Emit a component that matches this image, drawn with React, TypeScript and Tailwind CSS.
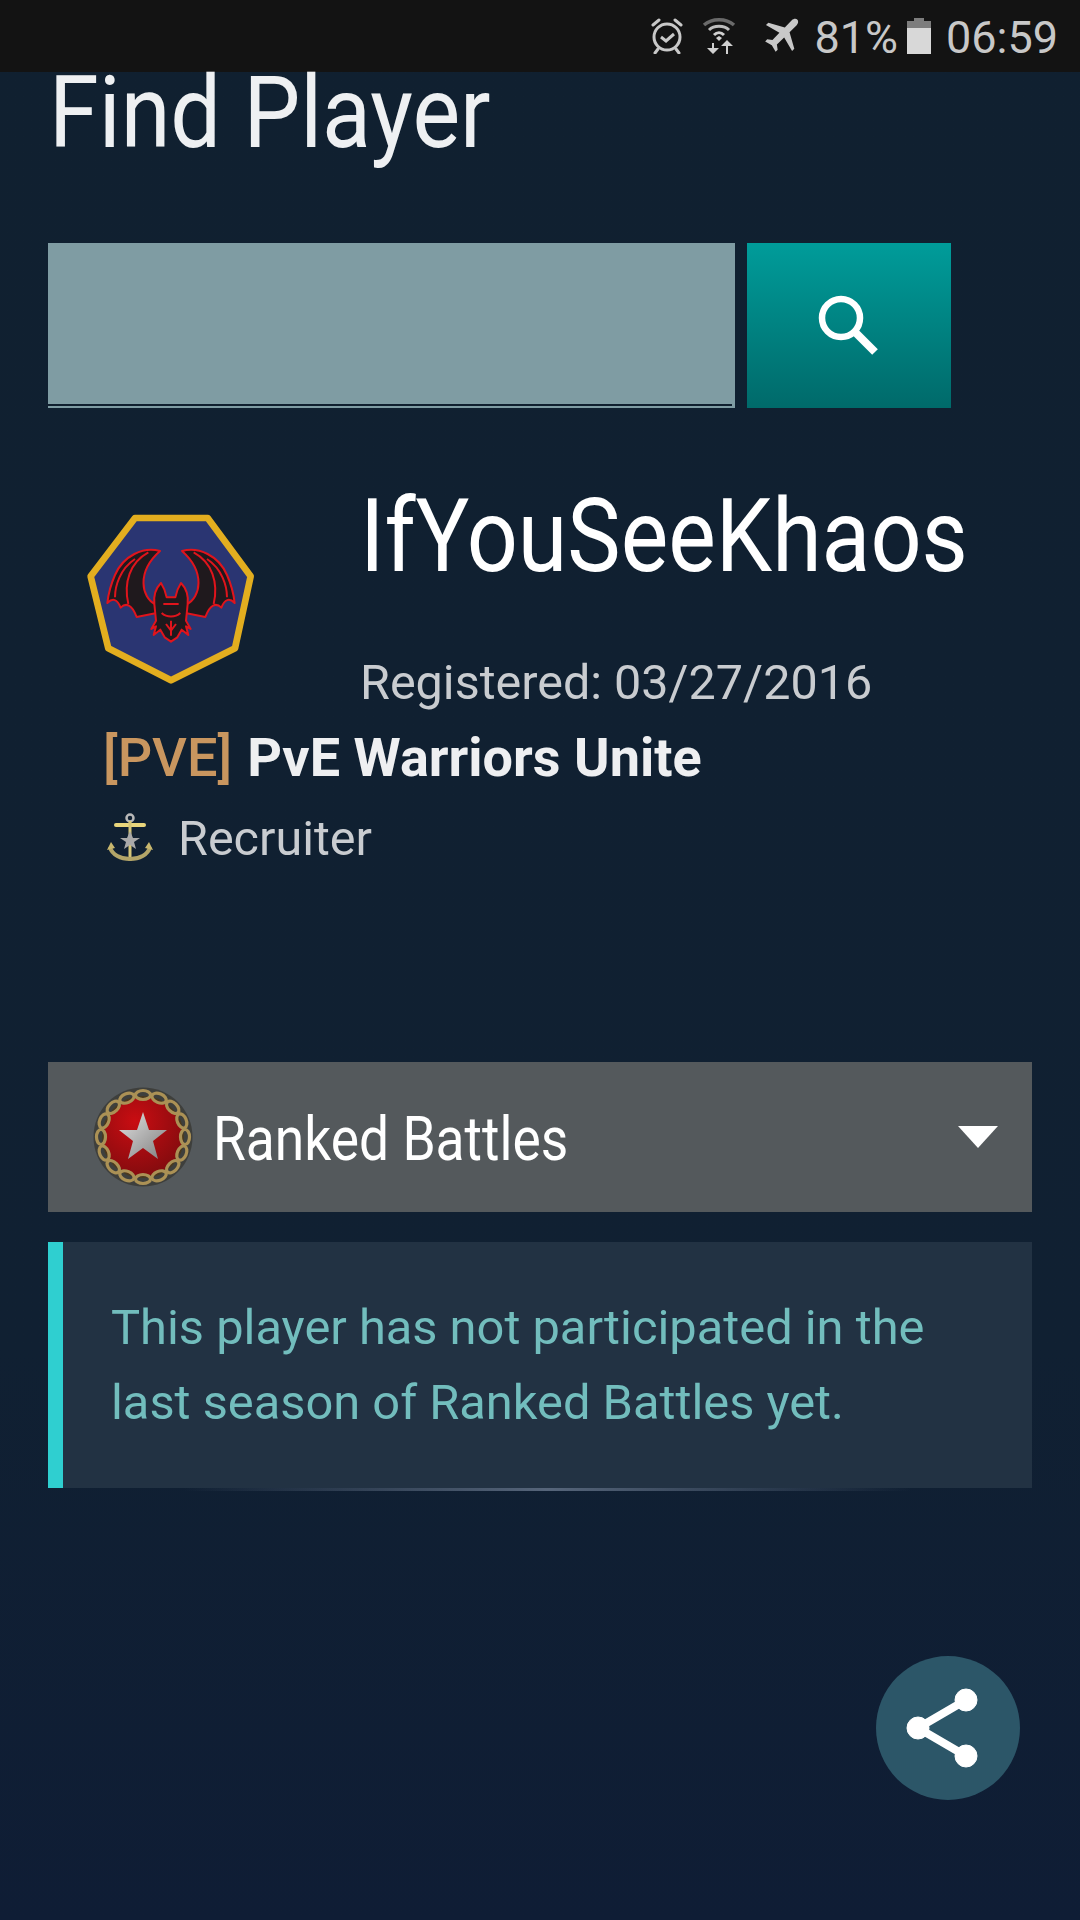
import React from "react";

function AlarmIcon() {
  return (
    <svg width="34" height="36" viewBox="0 0 34 36" fill="none" stroke="#c8c8c8" strokeWidth="3">
      <circle cx="17" cy="19" r="13" />
      <path d="M11 19l5 4 8-7" strokeWidth="3" />
      <path d="M3 7l6-5M31 7l-6-5M8 31l-3 4M26 31l3 4" strokeLinecap="round" />
    </svg>
  );
}

function WifiIcon() {
  return (
    <svg width="34" height="36" viewBox="0 0 34 36" fill="none">
      <path d="M2 7 C10 0 24 0 32 7" stroke="#6a6a6a" strokeWidth="3.5" />
      <path d="M7 12 C12 7 22 7 27 12" stroke="#bdbdbd" strokeWidth="3" />
      <path d="M12 17 C15 14 19 14 22 17" stroke="#d0d0d0" strokeWidth="3" />
      <path d="M14 20l3-2 3 2-3 3z" fill="#d0d0d0" />
      <path d="M10 25v5H5l6 6 6-6h-5v-5zM24 36v-8h-5l6-6 6 6h-5v8z" fill="#d0d0d0" />
    </svg>
  );
}

function PlaneIcon() {
  return (
    <svg width="38" height="38" viewBox="0 0 24 24" fill="#c8c8c8">
      <path d="M22.4 1.7c-.9-.9-2.6-.6-3.6.4l-4.4 4.5L4 3.6 2.5 5l8.5 5-4.4 4.6-3.3-.5L2 15.4l4.2 2.4L8.6 22l1.3-1.3-.5-3.3 4.6-4.4 5 8.5 1.4-1.5-3-10.4 4.5-4.4c1-1 1.3-2.7.4-3.6z" />
    </svg>
  );
}

function BatteryIcon() {
  return (
    <svg width="24" height="36" viewBox="0 0 24 36">
      <rect x="7" y="0" width="10" height="4" fill="#7d7d7d" />
      <rect x="0" y="3" width="24" height="7" fill="#7d7d7d" />
      <rect x="0" y="10" width="24" height="26" fill="#d8d8d8" />
    </svg>
  );
}

function ClanEmblem() {
  const wing =
    "M300 186 C250 172 190 200 165 258 C153 285 145 315 142 342 C158 326 172 330 182 356 C198 340 216 346 230 384 L290 372 L285 345 C245 325 228 250 300 186 Z";
  const ribs = "M265 190 C210 220 190 280 205 345 M225 210 C180 240 165 290 165 325";
  return (
    <svg width="220" height="220" viewBox="0 0 660 660">
      <polygon points="225,87 443,87 572,262 525,478 333,574 145,478 92,262" fill="#2a3572" stroke="#e3ae1f" strokeWidth="20" strokeLinejoin="round" />
      <g fill="#1f191d" stroke="#e0141c" strokeWidth="6" strokeLinejoin="round">
        <path d={wing} />
        <path d={wing} transform="translate(666 0) scale(-1 1)" />
        <path d="M283 345 C280 315 290 295 303 282 C315 300 318 315 320 325 L346 325 C348 315 351 300 363 282 C376 295 386 315 383 345 L378 395 L392 420 L378 412 L385 438 L365 422 L352 445 L333 458 L314 445 L301 422 L281 438 L288 412 L274 420 L288 395 Z" />
      </g>
      <g fill="none" stroke="#e0141c" strokeWidth="6">
        <path d={ribs} />
        <path d={ribs} transform="translate(666 0) scale(-1 1)" />
        <path d="M310 345h46M305 372c15 14 41 14 56 0M333 395v45M318 405l15 20 15-20" />
      </g>
    </svg>
  );
}

function AnchorIcon() {
  return (
    <svg width="46" height="52" viewBox="0 0 46 52" fill="none">
      <circle cx="23" cy="5" r="3.5" stroke="#b9b9b9" strokeWidth="2.5" />
      <path d="M9 12h28" stroke="#e9d67c" strokeWidth="4" strokeLinecap="round" />
      <path d="M23 8v40" stroke="#d6c678" strokeWidth="3" />
      <path d="M3 34c2 8 11 12 20 12s18-4 20-12" stroke="#b3a568" strokeWidth="4" />
      <path d="M0 37l4-8 4 6zM46 37l-4-8-4 6z" fill="#c8b76e" />
      <polygon points="23,18 26,25 33,25 27,29 29,36 23,32 17,36 19,29 13,25 20,25" fill="#a9a9a9" />
    </svg>
  );
}

function RankIcon() {
  const links = Array.from({ length: 16 }, (_, i) => (i * 360) / 16);
  return (
    <svg width="100" height="100" viewBox="0 0 100 100">
      <defs>
        <radialGradient id="red" cx="0.4" cy="0.3" r="0.8">
          <stop offset="0" stopColor="#c90d12" />
          <stop offset="1" stopColor="#7a0b0e" />
        </radialGradient>
        <linearGradient id="star" x1="0" y1="0" x2="1" y2="1">
          <stop offset="0" stopColor="#e2e2e2" />
          <stop offset="1" stopColor="#7f7f7f" />
        </linearGradient>
      </defs>
      <circle cx="50" cy="50" r="49.5" fill="#3e3f3c" />
      <circle cx="50" cy="50" r="40" fill="url(#red)" stroke="#4a3a1e" strokeWidth="2" />
      {links.map((a) => (
        <ellipse key={a} cx="50" cy="8" rx="7.5" ry="4.5" fill="none" stroke="#ab9155" strokeWidth="3.2" transform={`rotate(${a} 50 50)`} />
      ))}
      <polygon points="50,25 56,43 74,43 60,54 65,72 50,61 35,72 40,54 26,43 44,43" fill="url(#star)" />
    </svg>
  );
}

export default function App() {
  return (
    <div className="w-[1080px] h-[1920px] overflow-hidden flex flex-col bg-gradient-to-b from-[#102030] via-[#102032] via-70% to-[#0f1d35] font-['Roboto',sans-serif]">
      <div className="h-[72px] shrink-0 bg-[#131313] flex items-center justify-end pr-[22px] text-[#c8c8c8] text-[45px]">
        <div className="mr-[18px] flex"><AlarmIcon /></div>
        <div className="mr-[26px] flex"><WifiIcon /></div>
        <div className="mr-[14px] flex"><PlaneIcon /></div>
        <span className="mr-[9px] leading-none mt-[3px]">81%</span>
        <div className="mr-[15px] flex"><BatteryIcon /></div>
        <span className="leading-none mt-[3px]">06:59</span>
      </div>

      <div className="h-[171px] shrink-0 pl-[49px]">
        <div className="origin-left scale-x-[0.9] text-[100px] leading-[100px] mt-[-9px] text-[#eef0f2] whitespace-nowrap">Find Player</div>
      </div>

      <div className="flex h-[165px] shrink-0 pl-[48px] gap-[12px]">
        <div className="w-[687px] bg-[#7f9ca3] flex flex-col justify-end pb-[2px] pr-[3px]">
          <div className="h-[2px] bg-[#10202f]" />
        </div>
        <button className="w-[204px] bg-gradient-to-b from-[#009c9a] to-[#006a6a] flex items-center justify-center">
          <svg width="62" height="62" viewBox="0 0 62 62" fill="none" stroke="#ffffff" className="mr-[2px] mt-[-2px]">
            <circle cx="24" cy="24" r="19" strokeWidth="6.5" />
            <path d="M38 38l20 20" strokeWidth="8" />
          </svg>
        </button>
      </div>

      <div className="shrink-0 pl-[60px] pt-[81px] flex">
        <div className="w-[300px] shrink-0">
          <ClanEmblem />
        </div>
        <div className="flex flex-col">
          <div className="origin-left scale-x-[0.88] text-[102px] leading-[100px] mt-[-3px] text-white whitespace-nowrap">IfYouSeeKhaos</div>
          <div className="mt-[70px] text-[48.5px] leading-[54px] text-[#c9ccd0] whitespace-nowrap">Registered: 03/27/2016</div>
        </div>
      </div>

      <div className="shrink-0 pl-[103px] mt-[18px] flex flex-col">
        <div className="text-[54px] leading-[60px] whitespace-nowrap">
          <span className="text-[#c9965f] font-medium">[PVE]</span>
          <span className="text-[#eeeff1] ml-[15px] font-bold">PvE Warriors Unite</span>
        </div>
        <div className="flex items-center mt-[24px] pl-[4px]">
          <AnchorIcon />
          <span className="ml-[25px] text-[48.5px] leading-[54px] text-[#c9ccd0]">Recruiter</span>
        </div>
      </div>

      <div className="mx-[48px] mt-[196px] h-[150px] shrink-0 bg-[#54595c] flex items-center pl-[45px] pr-[34px]">
        <RankIcon />
        <span className="ml-[20px] origin-left scale-x-[0.86] text-[62px] leading-none text-white whitespace-nowrap flex-1 mt-[4px]">Ranked Battles</span>
        <div className="w-0 h-0 border-l-[20px] border-r-[20px] border-t-[22px] border-l-transparent border-r-transparent border-t-white" />
      </div>

      <div className="relative mx-[48px] mt-[30px] h-[246px] shrink-0 bg-[#223243] border-l-[15px] border-[#2fcfd0] pl-[48px] pt-[48px] text-[48.8px] leading-[75px] text-[#72bdbd]">
        <p className="whitespace-nowrap">This player has not participated in the</p>
        <p className="whitespace-nowrap">last season of Ranked Battles yet.</p>
        <div className="absolute left-[120px] right-[120px] -bottom-[3px] h-[3px] bg-gradient-to-r from-transparent via-[#56657a] to-transparent" />
      </div>

      <div className="flex justify-end pr-[60px] mt-[168px]">
        <div className="w-[144px] h-[144px] rounded-full bg-[#2c5668] flex items-center justify-center">
          <svg width="78" height="84" viewBox="0 0 78 84" fill="#ffffff" stroke="#ffffff" className="mr-[12px]">
            <path d="M15 42L63 14M15 42L63 70" strokeWidth="8" fill="none" />
            <circle cx="15" cy="42" r="11" />
            <circle cx="63" cy="14" r="11" />
            <circle cx="63" cy="70" r="11" />
          </svg>
        </div>
      </div>
    </div>
  );
}
